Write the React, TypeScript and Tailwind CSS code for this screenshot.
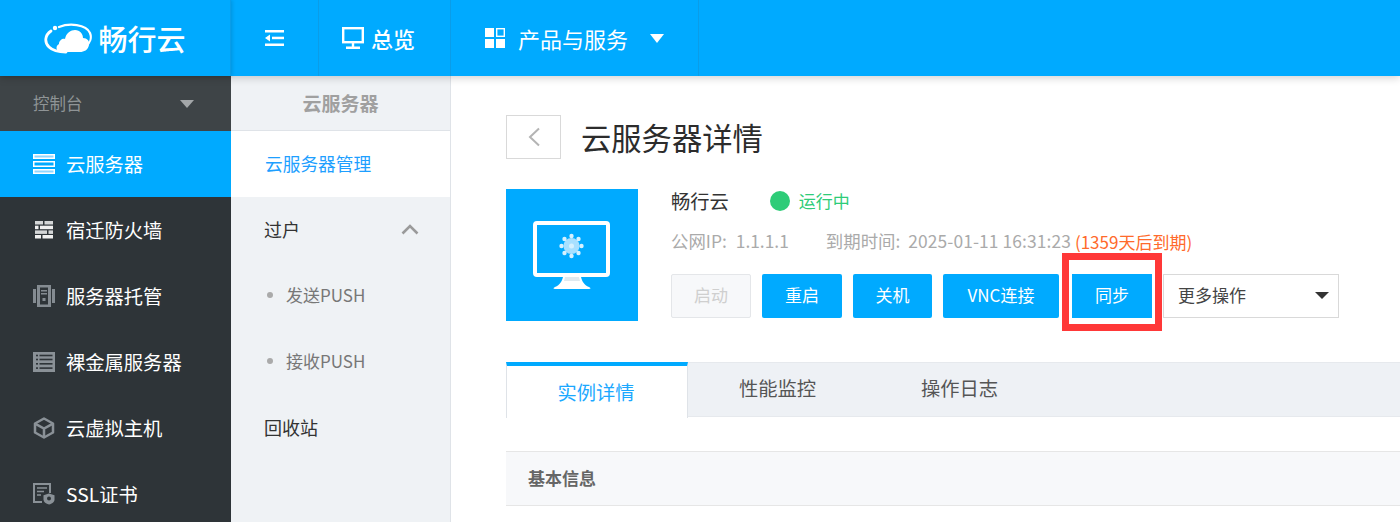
import React from "react";

const font = { fontFamily: '"Microsoft YaHei","Noto Sans CJK SC","Liberation Sans",sans-serif' };

const Logo = () => (
  <svg width="48" height="32" viewBox="0 0 48 32" fill="none" className="shrink-0">
    <path d="M15 5C25 1 42 2 46 11C48 16 46 21 42 24" stroke="#fff" strokeWidth="2.200" strokeLinecap="round" />
    <path d="M7 9C1 13 0 20 5 25C9 29 16 30 22 30" stroke="#fff" strokeWidth="2.800" strokeLinecap="round" />
    <circle cx="11" cy="6" r="2.200" fill="#fff" />
    <path d="M17 30C12 30 11 24 15 22C15 18 19 16 21 17C22 11 27 8 31 8C36 8 39 12 39 16C43 16 46 19 45 23C44 28 40 30 36 30Z" fill="#fff" />
  </svg>
);

const ServerIcon = () => (
  <svg width="22" height="20" viewBox="0 0 22 20" className="shrink-0">
    <rect x="0" y="0" width="22" height="5" fill="#fff" />
    <rect x="1.500" y="1.500" width="19" height="2" fill="#8fd6ff" />
    <rect x="0" y="7" width="22" height="6" fill="#fff" />
    <rect x="1.500" y="8.500" width="19" height="3" fill="#00aaff" />
    <rect x="0" y="15" width="22" height="5" fill="#fff" />
    <rect x="1.500" y="16.500" width="19" height="2" fill="#8fd6ff" />
  </svg>
);

const FirewallIcon = () => (
  <svg width="18" height="18" viewBox="0 0 18 18" className="shrink-0" fill="#d4d6d7">
    <rect x="0" y="0" width="8" height="3.500" /><rect x="9.500" y="0" width="8.500" height="3.500" />
    <rect x="0" y="4.700" width="3.500" height="3.500" fill="#f0f0f0" /><rect x="5" y="4.700" width="13" height="3.500" fill="#f0f0f0" />
    <rect x="0" y="9.400" width="12" height="3.500" /><rect x="13.500" y="9.400" width="4.500" height="3.500" />
    <rect x="0" y="14" width="6" height="3.500" fill="#f0f0f0" /><rect x="7.500" y="14" width="10.500" height="3.500" fill="#f0f0f0" />
  </svg>
);

const HostIcon = () => (
  <svg width="22" height="22" viewBox="0 0 22 22" className="shrink-0" fill="#848b91">
    <rect x="0" y="4" width="3" height="14" />
    <rect x="19" y="4" width="3" height="14" />
    <path fillRule="evenodd" d="M4 0h14v22H4zM7 2.500V19.500h8V2.500z" />
    <rect x="8" y="5" width="6" height="1.500" />
    <rect x="8" y="8" width="6" height="1.500" />
    <rect x="9.500" y="13" width="3" height="3" />
  </svg>
);

const BareIcon = () => (
  <svg width="22" height="20" viewBox="0 0 22 20" className="shrink-0">
    <rect width="22" height="20" fill="#8a9197" />
    <g fill="#2e3438">
      <rect x="3" y="2.700" width="2" height="1.600" /><rect x="6.500" y="2.700" width="13" height="1.600" />
      <rect x="3" y="6.700" width="2" height="1.600" /><rect x="6.500" y="6.700" width="13" height="1.600" />
      <rect x="3" y="11" width="2" height="1.600" /><rect x="6.500" y="11" width="13" height="1.600" />
      <rect x="3" y="15.300" width="2" height="1.600" /><rect x="6.500" y="15.300" width="13" height="1.600" />
    </g>
  </svg>
);

const BoxIcon = () => (
  <svg width="22" height="22" viewBox="0 0 22 22" className="shrink-0" fill="none" stroke="#8a9197" strokeWidth="2.500">
    <path d="M11 1.500 20 6.500V15.500L11 20.500 2 15.500V6.500Z" strokeLinejoin="round" />
    <path d="M2.500 6.800 11 11.500 19.500 6.800M11 11.500V20" />
  </svg>
);

const SslIcon = () => (
  <svg width="22" height="22" viewBox="0 0 22 22" className="shrink-0">
    <path d="M17 10V1H1v18h8" fill="none" stroke="#8a9197" strokeWidth="2" />
    <path d="M4 5h10M4 8.500h7M4 12h4" stroke="#8a9197" strokeWidth="1.500" />
    <path d="M16 10.500l5.500 1.800v4.200c0 2.500-2.500 4.300-5.500 5-3-.7-5.500-2.500-5.500-5v-4.200z" fill="#8a9197" />
    <circle cx="16" cy="15.500" r="2" fill="#2e3438" />
  </svg>
);

const MenuRow = ({ icon, label, active }: { icon: React.ReactNode; label: string; active?: boolean }) => (
  <div className={`flex h-[66px] items-center gap-[11px] pl-[33px] text-[19.300px] text-white ${active ? "bg-[#00aaff]" : ""}`}>
    <span className="flex w-[22px] justify-center">{icon}</span>
    <span>{label}</span>
  </div>
);

const ActionBtn = ({ label, width }: { label: string; width: string }) => (
  <button className={`flex h-[44px] items-center justify-center rounded-[2px] bg-[#00aaff] pb-[2px] text-[17px] text-white ${width}`}>{label}</button>
);

const Monitor = () => (
  <svg width="78" height="68" viewBox="0 0 78 68">
    <rect x="2" y="2" width="73" height="52" rx="2" fill="#00aaff" stroke="#fff" strokeWidth="4" />
    <path d="M30 56h18c1 4 3 8 8 10 2 1 2 2 0 2H22c-2 0-2-1 0-2 5-2 7-6 8-10z" fill="#fff" />
    <path d="M32 56h14l1 4H31z" fill="#dfe9ef" />
    <g fill="#d6f1ff">
      <circle cx="38.500" cy="25" r="8" fill="#a8e0ff" />
      <circle cx="38.500" cy="15" r="2.200" /><circle cx="38.500" cy="35" r="2.200" />
      <circle cx="28.500" cy="25" r="2.200" /><circle cx="48.500" cy="25" r="2.200" />
      <circle cx="31.500" cy="18" r="2.200" /><circle cx="45.500" cy="18" r="2.200" />
      <circle cx="31.500" cy="32" r="2.200" /><circle cx="45.500" cy="32" r="2.200" />
      <circle cx="38.500" cy="25" r="2.500" />
    </g>
  </svg>
);

export default function App() {
  return (
    <div className="flex h-[522px] w-[1400px] flex-col overflow-hidden bg-white" style={font}>
      <header className="relative z-10 flex h-[76px] shrink-0 bg-[#00aaff] text-white shadow-[0_2px_8px_rgba(0,0,0,0.18)]">
        <div className="flex w-[231px] items-center justify-center gap-[6px] border-r border-[#0a9de8] text-[29px] font-medium shadow-[1px_0_4px_rgba(0,0,0,0.15)]">
          <Logo />
          <span className="leading-none">畅行云</span>
        </div>
        <div className="flex w-[88px] items-center justify-center border-r border-[#0a9de8]">
          <svg width="20" height="16" viewBox="0 0 20 16" fill="#fff">
            <rect x="0" y="0" width="19" height="2.500" />
            <rect x="7" y="6.700" width="12" height="2.500" />
            <rect x="0" y="13.500" width="19" height="2.500" />
            <path d="M5 4.500v7L0 8z" />
          </svg>
        </div>
        <div className="flex w-[132px] items-center gap-[7px] border-r border-[#0a9de8] pl-[23px] text-[22px] font-medium">
          <svg width="22" height="22" viewBox="0 0 22 22" fill="none" stroke="#fff" strokeWidth="2.400" className="shrink-0">
            <rect x="1.200" y="1.200" width="19.600" height="14" />
            <path d="M11 15v5M4 20.700h14" />
          </svg>
          <span>总览</span>
        </div>
        <div className="flex w-[248px] items-center gap-[13px] border-r border-[#0a9de8] pl-[34px] text-[22px]">
          <svg width="20" height="20" viewBox="0 0 20 20" fill="#fff" className="shrink-0">
            <rect x="0" y="0" width="9" height="9" />
            <rect x="11.700" y="0.700" width="7.600" height="7.600" fill="none" stroke="#fff" strokeWidth="1.400" />
            <rect x="0" y="11" width="9" height="9" />
            <rect x="11" y="11" width="9" height="9" />
          </svg>
          <span>产品与服务</span>
          <span className="ml-[9px] h-0 w-0 border-x-[7px] border-t-[9px] border-x-transparent border-t-white" />
        </div>
      </header>

      <div className="flex min-h-0 flex-1">
        <aside className="w-[231px] shrink-0 bg-[#2e3438]">
          <div className="flex h-[55px] items-center justify-between bg-[#3e4447] pl-[33px] pr-[37px] text-[16.500px] text-[#8f9496]">
            <span>控制台</span>
            <span className="h-0 w-0 border-x-[7px] border-t-[8px] border-x-transparent border-t-[#a3a7a9]" />
          </div>
          <MenuRow active icon={<ServerIcon />} label="云服务器" />
          <MenuRow icon={<FirewallIcon />} label="宿迁防火墙" />
          <MenuRow icon={<HostIcon />} label="服务器托管" />
          <MenuRow icon={<BareIcon />} label="裸金属服务器" />
          <MenuRow icon={<BoxIcon />} label="云虚拟主机" />
          <MenuRow icon={<SslIcon />} label="SSL证书" />
        </aside>

        <nav className="w-[220px] shrink-0 border-r border-[#dfe3e8] bg-[#eff2f5]">
          <div className="flex h-[55px] items-center justify-center border-b border-[#dfe3e8] text-[19px] font-bold text-[#a0a0a0]">云服务器</div>
          <div className="flex h-[66px] items-center bg-white pb-[2px] pl-[34px] text-[17.700px] text-[#1e9fff] shadow-[-1px_0_0_#00aaff]">云服务器管理</div>
          <div className="flex h-[66px] items-center justify-between pb-[2px] pl-[33px] pr-[31px] text-[18px] text-[#333]">
            <span>过户</span>
            <svg width="18" height="11" viewBox="0 0 18 11" fill="none" stroke="#9a9a9a" strokeWidth="2.600"><path d="M1.500 9.500 9 2l7.500 7.500" /></svg>
          </div>
          <div className="flex h-[66px] items-center gap-[13px] pb-[2px] pl-[36px] text-[17px] text-[#777]">
            <span className="h-[6px] w-[6px] rounded-full bg-[#aaa]" />
            <span>发送PUSH</span>
          </div>
          <div className="flex h-[66px] items-center gap-[13px] pb-[2px] pl-[36px] text-[17px] text-[#777]">
            <span className="h-[6px] w-[6px] rounded-full bg-[#aaa]" />
            <span>接收PUSH</span>
          </div>
          <div className="flex h-[66px] items-center pb-[2px] pl-[33px] text-[18px] text-[#333]">回收站</div>
        </nav>

        <main className="min-w-0 flex-1 pl-[55px] pt-[39px]">
          <div className="flex items-center gap-[20px]">
            <div className="flex h-[44px] w-[55px] items-center justify-center border border-[#d9d9d9]">
              <svg width="14" height="20" viewBox="0 0 14 20" fill="none" stroke="#b4b4b4" strokeWidth="2"><path d="M12 1.500 3 10l9 8.500" /></svg>
            </div>
            <h1 className="text-[30.300px] leading-[44px] text-[#2c2c2c]">云服务器详情</h1>
          </div>

          <section className="mt-[30px] flex">
            <div className="flex h-[132px] w-[132px] shrink-0 items-center justify-center bg-[#00aaff]"><Monitor /></div>
            <div className="ml-[33px] min-w-0 flex-1">
              <div className="flex h-[24px] items-center">
                <span className="text-[19.300px] text-[#333]">畅行云</span>
                <span className="ml-[41px] h-[20px] w-[20px] rounded-full bg-[#2ecc78]" />
                <span className="ml-[9px] text-[17px] text-[#2ecc78]">运行中</span>
              </div>
              <div className="mt-[18px] flex h-[24px] items-center whitespace-nowrap pb-[3px] text-[17.400px] text-[#aaa]">
                <span>公网IP:</span>
                <span className="ml-[9px]">1.1.1.1</span>
                <span className="ml-[37px]">到期时间:</span>
                <span className="ml-[8px] tracking-[0.1px]">2025-01-11 16:31:23</span>
                <span className="ml-[4px] text-[17px] text-[#ff6a2b]">(1359天后到期)</span>
              </div>
              <div className="mt-[19px] flex items-center">
                <button className="flex h-[44px] w-[80px] items-center justify-center rounded-[2px] border border-[#e4e6e9] bg-[#f7f8fa] pb-[2px] text-[17px] text-[#cfcfcf]">启动</button>
                <ActionBtn label="重启" width="ml-[11px] w-[80px]" />
                <ActionBtn label="关机" width="ml-[11px] w-[79px]" />
                <ActionBtn label="VNC连接" width="ml-[11px] w-[116px]" />
                <span className="relative ml-[13px] flex">
                  <button className="flex h-[44px] w-[80px] items-center justify-center bg-[#00aaff] pb-[2px] text-[17px] text-white">同步</button>
                  <span className="absolute left-[-10px] top-[-21px] h-[78px] w-[100px] border-[7px] border-[#ff3838]" />
                </span>
                <div className="ml-[11px] flex h-[44px] w-[176px] items-center justify-between border border-[#d9d9d9] pb-[2px] pl-[14px] pr-[9px] text-[17px] text-[#444]">
                  <span>更多操作</span>
                  <span className="h-0 w-0 border-x-[7px] border-t-[7px] border-x-transparent border-t-[#333]" />
                </div>
              </div>
            </div>
          </section>

          <div className="mt-[41px] flex h-[55px] border-t border-b border-[#e6e9ed] bg-[#eef1f5] text-[19.300px] text-[#555]">
            <div className="-mb-px -mt-px flex h-[56px] w-[182px] items-center justify-center border-r border-l border-[#dfe3e8] border-t-[4px] border-t-[#00aaff] bg-white pr-[2px] text-[#1ba8ff]">实例详情</div>
            <div className="flex w-[181px] items-center justify-center pb-[3px] pr-[2px]">性能监控</div>
            <div className="flex w-[130px] items-center pb-[3px] pl-[52px] whitespace-nowrap">操作日志</div>
          </div>

          <div className="mt-[34px] flex h-[55px] items-center border-y border-[#e6e6e6] bg-[#f7f8fa] pb-[2px] pl-[22px] text-[17px] font-bold text-[#666]">基本信息</div>
        </main>
      </div>
    </div>
  );
}
